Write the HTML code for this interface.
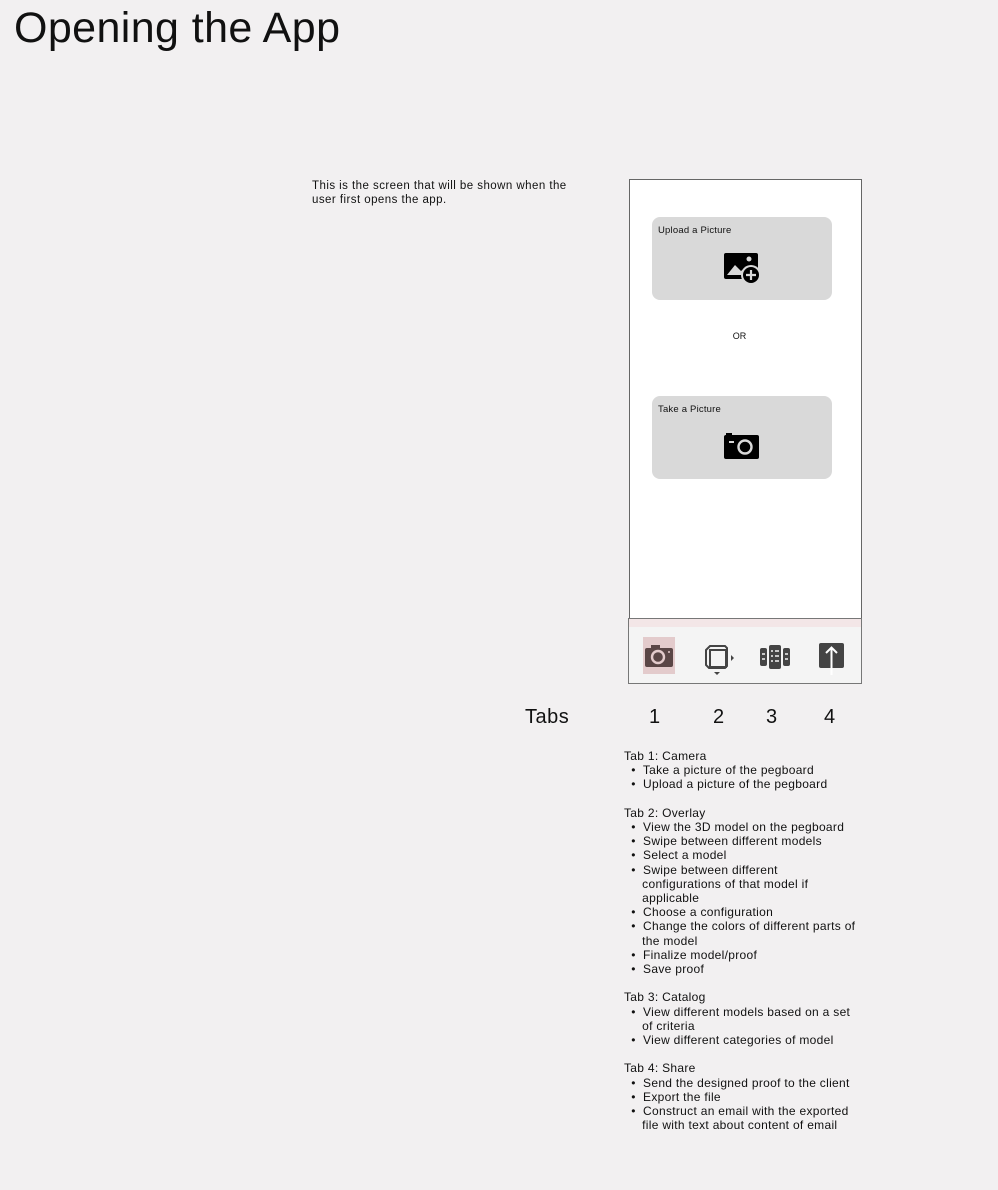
<!DOCTYPE html>
<html><head><meta charset="utf-8"><style>
body{margin:0;width:998px;height:1190px;background:#f2f0f1;font-family:"Liberation Sans",sans-serif;color:#111;position:relative;overflow:hidden}
.a{position:absolute}
h1{position:absolute;left:14px;top:4px;margin:0;font-weight:normal;font-size:43px;letter-spacing:0.4px}
.phone{left:629px;top:179px;width:231px;height:439px;background:#fff;border:1px solid #666;border-bottom:none}
.card{position:absolute;left:22px;width:180px;height:83px;background:#d9d9d9;border-radius:8px}
.card span{position:absolute;left:6px;top:8px;font-size:9.5px;letter-spacing:0.2px}
.tabs{left:628px;top:618px;width:232px;height:64px;background:#f4f4f4;border:1px solid #777}
.list{left:624px;top:749px;font-size:12px;line-height:14.2px;white-space:pre;letter-spacing:0.3px}
</style></head><body>
<h1>Opening the App</h1>
<div class="a" style="left:312px;top:180px;font-size:11.5px;line-height:13.5px;width:290px;letter-spacing:0.45px">This is the screen that will be shown when the<br>user first opens the app.</div>
<div class="a phone">
 <div class="card" style="top:37px"><span>Upload a Picture</span>
  <svg class="a" style="left:72px;top:36px" width="38" height="34" viewBox="0 0 38 34"><rect x="0" y="0" width="34" height="26" rx="2" fill="#000"/><path d="M3 22 L11 12 L17 18 L22 14 L30 22Z" fill="#d9d9d9"/><circle cx="25" cy="6" r="2.5" fill="#d9d9d9"/><circle cx="27" cy="22" r="10" fill="#d9d9d9"/><circle cx="27" cy="22" r="8" fill="#000"/><path d="M27 17v10M22 22h10" stroke="#d9d9d9" stroke-width="2.2"/></svg>
 </div>
 <div class="a" style="left:0;width:219px;top:151px;text-align:center;font-size:9px">OR</div>
 <div class="card" style="top:216px"><span>Take a Picture</span>
  <svg class="a" style="left:72px;top:36px" width="36" height="28" viewBox="0 0 36 28"><rect x="0" y="3" width="35" height="24" rx="2" fill="#000"/><rect x="2" y="1" width="6" height="3" fill="#000"/><rect x="5" y="9" width="5" height="2" fill="#d9d9d9"/><circle cx="21" cy="15" r="6.5" fill="none" stroke="#d9d9d9" stroke-width="2.4"/></svg>
 </div>
</div>
<div class="a tabs">
 <div class="a" style="left:0;top:0;width:232px;height:8px;background:#f3e6e7"></div>
 <div class="a" style="left:14px;top:18px;width:32px;height:37px;background:#e3cbcc"></div>
 <svg class="a" style="left:16px;top:26px" width="28" height="22" viewBox="0 0 28 22"><rect x="0" y="3" width="28" height="19" rx="2" fill="#5a4646"/><rect x="6" y="0" width="9" height="4" fill="#5a4646"/><circle cx="13" cy="12" r="6" fill="none" stroke="#e3cbcc" stroke-width="2.4"/><circle cx="24" cy="7" r="1" fill="#e3cbcc"/></svg>
 <svg class="a" style="left:74px;top:24px" width="32" height="32" viewBox="0 0 32 32"><path d="M3 7 L7 3 H22 L24 5 V23 L22 25 H6 L3 22Z" fill="none" stroke="#444" stroke-width="2"/><rect x="7" y="7" width="16" height="17" fill="none" stroke="#444" stroke-width="2"/><path d="M28 12 L31 15 L28 18Z" fill="#444"/><path d="M11 29 L14 32 L17 29Z" fill="#444"/></svg>
 <svg class="a" style="left:131px;top:26px" width="30" height="24" viewBox="0 0 30 24"><rect x="0" y="3" width="7" height="18" rx="2" fill="#444"/><rect x="23" y="3" width="7" height="18" rx="2" fill="#444"/><rect x="9" y="0" width="12" height="24" rx="2" fill="#444"/><path d="M2 9h3M2 14h3M25 9h3M25 14h3M11 6h2M15 6h4M11 11h2M15 11h4M11 16h2M15 16h4" stroke="#f4f4f4" stroke-width="1.6"/></svg>
 <svg class="a" style="left:190px;top:24px" width="26" height="32" viewBox="0 0 26 32"><rect x="0" y="0" width="25" height="25" rx="2" fill="#444"/><path d="M12.5 32V5M7 10l5.5-5.5L18 10" fill="none" stroke="#fff" stroke-width="2"/></svg>
</div>
<div class="a" style="left:525px;top:706px;font-size:20px;letter-spacing:0.5px">Tabs</div>
<div class="a" style="left:649px;top:706px;font-size:20px">1</div>
<div class="a" style="left:713px;top:706px;font-size:20px">2</div>
<div class="a" style="left:766px;top:706px;font-size:20px">3</div>
<div class="a" style="left:824px;top:706px;font-size:20px">4</div>
<div class="a list">Tab 1: Camera
  •  Take a picture of the pegboard
  •  Upload a picture of the pegboard

Tab 2: Overlay
  •  View the 3D model on the pegboard
  •  Swipe between different models
  •  Select a model
  •  Swipe between different
     configurations of that model if
     applicable
  •  Choose a configuration
  •  Change the colors of different parts of
     the model
  •  Finalize model/proof
  •  Save proof

Tab 3: Catalog
  •  View different models based on a set
     of criteria
  •  View different categories of model

Tab 4: Share
  •  Send the designed proof to the client
  •  Export the file
  •  Construct an email with the exported
     file with text about content of email</div>
</body></html>
